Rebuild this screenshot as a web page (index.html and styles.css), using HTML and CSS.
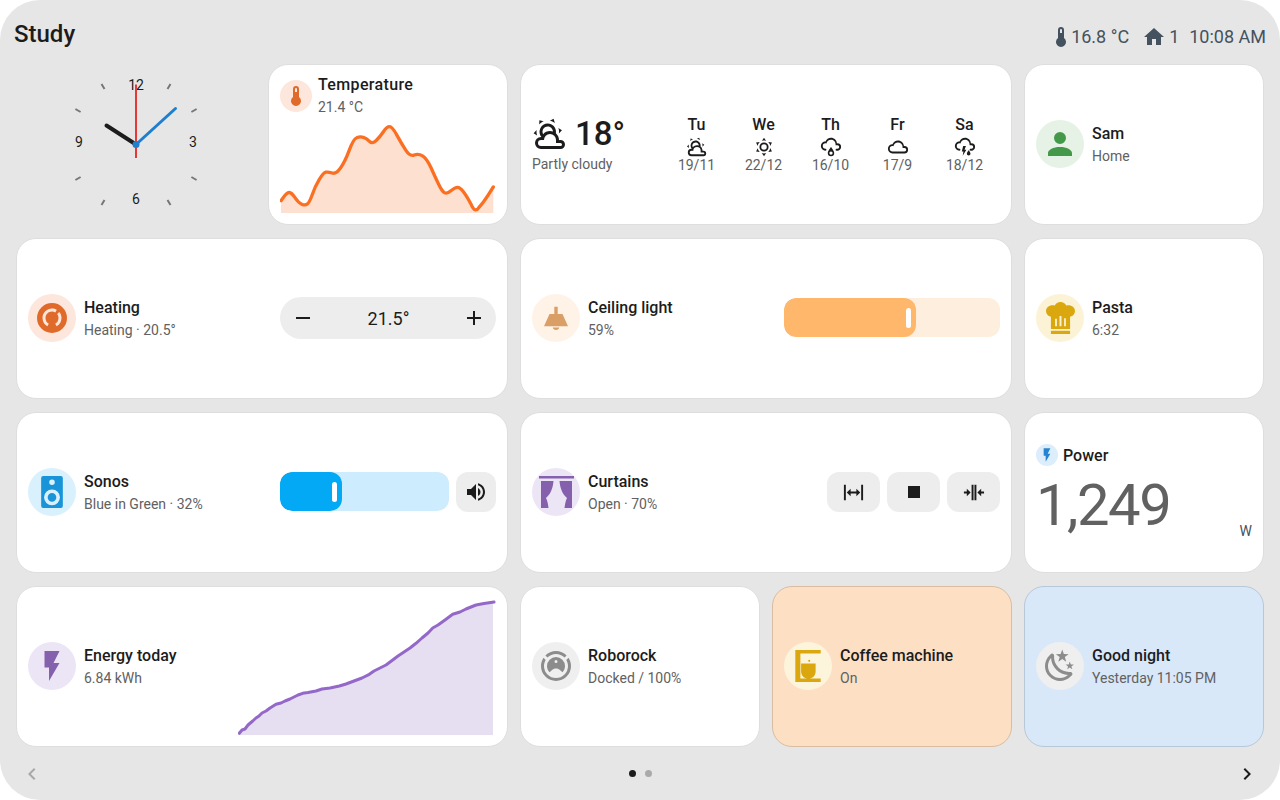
FILE: index.html
```html
<!DOCTYPE html>
<html lang="en">
<head>
<meta charset="utf-8">
<title>Study</title>
<link rel="stylesheet" href="styles.css">
</head>
<body>
<div class="screen">
  <header class="topbar">
    <h1 class="title">Study</h1>
    <div class="status">
      <span class="status-item"><svg class="i24 status-thermo" viewBox="0 0 24 24"><path d="M15 13V5A3 3 0 0 0 9 5V13A5 5 0 1 0 15 13M12 4A1 1 0 0 1 13 5V8H11V5A1 1 0 0 1 12 4Z"/></svg>16.8 °C</span>
      <span class="status-item status-home"><svg class="i24" viewBox="0 0 24 24"><path d="M10,20V14H14V20H19V12H22L12,3L2,12H5V20H10Z"/></svg>1</span>
      <span class="status-item">10:08 AM</span>
    </div>
  </header>

  <main class="grid">
    <div class="clock">
      <svg class="clock-svg" viewBox="16 63.500 240 161">
        <g class="clock-ticks">
          <path d="M101.500 83.400L104.500 88.600M170.500 83.400L167.500 88.600M75.400 108.500L80.600 111.500M196.600 108.500L191.400 111.500M75.400 179.500L80.600 176.500M196.600 179.500L191.400 176.500M101.500 204.600L104.500 199.400M170.500 204.600L167.500 199.400"/>
        </g>
        <g class="clock-nums">
          <text x="136" y="89.500">12</text>
          <text x="193" y="146.500">3</text>
          <text x="136" y="203.500">6</text>
          <text x="79" y="146.500">9</text>
        </g>
        <path class="hand-h" d="M136 144L106.500 125"/>
        <path class="hand-m" d="M136 144L175.500 108"/>
        <path class="hand-s" d="M136 84V157.500"/>
        <circle class="hand-c" cx="136" cy="144" r="3.500"/>
      </svg>
    </div>

    <section class="card card-col card-temp">
      <div class="row">
        <span class="badge badge-sm badge-low c-orange"><svg class="i24" viewBox="0 0 24 24"><path d="M15 13V5A3 3 0 0 0 9 5V13A5 5 0 1 0 15 13M12 4A1 1 0 0 1 13 5V8H11V5A1 1 0 0 1 12 4Z"/></svg></span>
        <div class="info"><div class="name name-wide">Temperature</div><div class="sub">21.4 °C</div></div>
      </div>
      <svg class="temp-chart" viewBox="280 120 216 96">
        <path class="temp-fill" d="M281 200.700Q286.700 192.300 289.200 192.500Q291.700 192.700 295 197.700Q298.300 202.700 301.700 204.200Q305 205.700 307.200 204.200Q309.300 202.700 312.200 194.700Q315 186.700 319.200 179.700Q323.300 172.700 325.800 172.200Q328.300 171.700 332.200 173Q336 174.300 340.500 168Q345 161.700 349.200 150.400Q353.300 139 356.700 137.700Q360 136.300 363.400 137.300Q366.700 138.300 369.500 141.300Q372.300 144.300 376.200 140.500Q380 136.700 383.400 131.700Q386.700 126.700 389.500 126.700Q392.300 126.700 397 135.400Q401.700 144 405.900 150.400Q410 156.700 414.200 155Q418.300 153.300 422.500 155.800Q426.700 158.300 430.900 167.500Q435 176.700 438.400 183.700Q441.700 190.700 444.200 192.500Q446.700 194.300 450.900 190.800Q455 187.300 457.500 187.300Q460 187.300 463.400 191.700Q466.700 196 470.900 203.900Q475 214 479.200 207.200Q483.300 202.700 488.300 194.900L493.300 187V213H281Z"/>
        <path class="temp-line" d="M281 200.700Q286.700 192.300 289.200 192.500Q291.700 192.700 295 197.700Q298.300 202.700 301.700 204.200Q305 205.700 307.200 204.200Q309.300 202.700 312.200 194.700Q315 186.700 319.200 179.700Q323.300 172.700 325.800 172.200Q328.300 171.700 332.200 173Q336 174.300 340.500 168Q345 161.700 349.200 150.400Q353.300 139 356.700 137.700Q360 136.300 363.400 137.300Q366.700 138.300 369.500 141.300Q372.300 144.300 376.200 140.500Q380 136.700 383.400 131.700Q386.700 126.700 389.500 126.700Q392.300 126.700 397 135.400Q401.700 144 405.900 150.400Q410 156.700 414.200 155Q418.300 153.300 422.500 155.800Q426.700 158.300 430.900 167.500Q435 176.700 438.400 183.700Q441.700 190.700 444.200 192.500Q446.700 194.300 450.900 190.800Q455 187.300 457.500 187.300Q460 187.300 463.400 191.700Q466.700 196 470.900 203.900Q475 214 479.200 207.200Q483.300 202.700 488.300 194.900L493.300 187"/>
      </svg>
    </section>

    <section class="card span2 weather">
      <div class="now">
        <div class="now-top">
          <svg class="i36" viewBox="0 0 24 24"><path d="M12.740,5.470C15.100,6.500 16.350,9.030 15.920,11.460C17.190,12.560 18,14.190 18,16V16.170C18.310,16.060 18.650,16 19,16A3,3 0 0,1 22,19A3,3 0 0,1 19,22H6A4,4 0 0,1 2,18A4,4 0 0,1 6,14H6.270C5,12.450 4.600,10.240 5.500,8.260C6.720,5.500 9.970,4.240 12.740,5.470M11.930,7.300C10.160,6.500 8.090,7.310 7.310,9.070C6.850,10.090 6.930,11.220 7.410,12.130C8.500,10.830 10.160,10 12,10C12.700,10 13.380,10.120 14,10.340C13.940,9.060 13.180,7.860 11.930,7.300M13.550,3.640C13,3.400 12.450,3.230 11.880,3.120L14.370,1.820L15.270,4.710C14.760,4.290 14.190,3.930 13.550,3.640M6.090,4.440C5.600,4.790 5.170,5.190 4.800,5.630L4.910,2.820L7.870,3.500C7.250,3.710 6.650,4.030 6.090,4.440M18,9.710C17.910,9.120 17.780,8.550 17.590,8L19.970,9.500L17.920,11.730C18.030,11.080 18.050,10.400 18,9.710M3.040,11.300C3.110,11.900 3.240,12.470 3.430,13L1.060,11.500L3.100,9.280C3,9.930 2.970,10.610 3.040,11.300M19,18H16V16A4,4 0 0,0 12,12A4,4 0 0,0 8,16H6A2,2 0 0,0 4,18A2,2 0 0,0 6,20H19A1,1 0 0,0 20,19A1,1 0 0,0 19,18Z"/></svg>
          <span class="now-temp">18°</span>
        </div>
        <div class="sub">Partly cloudy</div>
      </div>
      <div class="forecast">
        <div class="day"><div class="day-name">Tu</div><svg class="i22" viewBox="0 0 24 24"><path d="M12.740,5.470C15.100,6.500 16.350,9.030 15.920,11.460C17.190,12.560 18,14.190 18,16V16.170C18.310,16.060 18.650,16 19,16A3,3 0 0,1 22,19A3,3 0 0,1 19,22H6A4,4 0 0,1 2,18A4,4 0 0,1 6,14H6.270C5,12.450 4.600,10.240 5.500,8.260C6.720,5.500 9.970,4.240 12.740,5.470M11.930,7.300C10.160,6.500 8.090,7.310 7.310,9.070C6.850,10.090 6.930,11.220 7.410,12.130C8.500,10.830 10.160,10 12,10C12.700,10 13.380,10.120 14,10.340C13.940,9.060 13.180,7.860 11.930,7.300M13.550,3.640C13,3.400 12.450,3.230 11.880,3.120L14.370,1.820L15.270,4.710C14.760,4.290 14.190,3.930 13.550,3.640M6.090,4.440C5.600,4.790 5.170,5.190 4.800,5.630L4.910,2.820L7.870,3.500C7.250,3.710 6.650,4.030 6.090,4.440M18,9.710C17.910,9.120 17.780,8.550 17.590,8L19.970,9.500L17.920,11.730C18.030,11.080 18.050,10.400 18,9.710M3.040,11.300C3.110,11.900 3.240,12.470 3.430,13L1.060,11.500L3.100,9.280C3,9.930 2.970,10.610 3.040,11.300M19,18H16V16A4,4 0 0,0 12,12A4,4 0 0,0 8,16H6A2,2 0 0,0 4,18A2,2 0 0,0 6,20H19A1,1 0 0,0 20,19A1,1 0 0,0 19,18Z"/></svg><div class="sub">19/11</div></div>
        <div class="day"><div class="day-name">We</div><svg class="i22" viewBox="0 0 24 24"><path d="M12,7A5,5 0 0,1 17,12A5,5 0 0,1 12,17A5,5 0 0,1 7,12A5,5 0 0,1 12,7M12,9A3,3 0 0,0 9,12A3,3 0 0,0 12,15A3,3 0 0,0 15,12A3,3 0 0,0 12,9M12,2L14.390,5.420C13.650,5.150 12.840,5 12,5C11.160,5 10.350,5.150 9.610,5.420L12,2M3.340,7L7.500,6.650C6.900,7.160 6.360,7.780 5.940,8.500C5.500,9.240 5.250,10 5.110,10.790L3.340,7M3.360,17L5.120,13.230C5.260,14 5.530,14.780 5.950,15.500C6.370,16.240 6.910,16.860 7.500,17.370L3.360,17M20.650,7L18.880,10.790C18.740,10 18.470,9.230 18.050,8.500C17.630,7.780 17.100,7.150 16.500,6.640L20.650,7M20.640,17L16.500,17.360C17.090,16.850 17.620,16.220 18.040,15.500C18.460,14.770 18.730,14 18.870,13.210L20.640,17M12,22L9.590,18.560C10.330,18.830 11.140,19 12,19C12.820,19 13.630,18.830 14.370,18.560L12,22Z"/></svg><div class="sub">22/12</div></div>
        <div class="day"><div class="day-name">Th</div><svg class="i22" viewBox="0 0 24 24"><path d="M6,14.030A1,1 0 0,1 7,15.030C7,15.580 6.550,16.030 6,16.030C3.240,16.030 1,13.790 1,11.030C1,8.270 3.240,6.030 6,6.030C7,3.680 9.300,2.030 12,2.030C15.430,2.030 18.240,4.690 18.500,8.060L19,8.030A4,4 0 0,1 23,12.030C23,14.240 21.210,16.030 19,16.030H18C17.450,16.030 17,15.580 17,15.030C17,14.470 17.450,14.030 18,14.030H19A2,2 0 0,0 21,12.030A2,2 0 0,0 19,10.030H17V9.030C17,6.270 14.760,4.030 12,4.030C9.500,4.030 7.450,5.840 7.060,8.210C6.730,8.090 6.370,8.030 6,8.030A3,3 0 0,0 3,11.030A3,3 0 0,0 6,14.030M12,12C12.500,12.700 15.500,16.500 15.500,18.500A3.500,3.500 0 0,1 8.500,18.500C8.500,16.500 11.500,12.700 12,12M12,16.800A1.800,1.800 0 0,0 10.200,18.600A1.800,1.800 0 0,0 13.800,18.600A1.800,1.800 0 0,0 12,16.800Z"/></svg><div class="sub">16/10</div></div>
        <div class="day"><div class="day-name">Fr</div><svg class="i22" viewBox="0 0 24 24"><path d="M6,19A5,5 0 0,1 1,14A5,5 0 0,1 6,9C7,6.650 9.300,5 12,5C15.430,5 18.240,7.660 18.500,11.030L19,11A4,4 0 0,1 23,15A4,4 0 0,1 19,19H6M19,13H17V12A5,5 0 0,0 12,7C9.500,7 7.450,8.820 7.060,11.190C6.730,11.070 6.370,11 6,11A3,3 0 0,0 3,14A3,3 0 0,0 6,17H19A2,2 0 0,0 21,15A2,2 0 0,0 19,13Z"/></svg><div class="sub">17/9</div></div>
        <div class="day"><div class="day-name">Sa</div><svg class="i22" viewBox="0 0 24 24"><path d="M6,14.030A1,1 0 0,1 7,15.030C7,15.580 6.550,16.030 6,16.030C3.240,16.030 1,13.790 1,11.030C1,8.270 3.240,6.030 6,6.030C7,3.680 9.300,2.030 12,2.030C15.430,2.030 18.240,4.690 18.500,8.060L19,8.030A4,4 0 0,1 23,12.030C23,14.240 21.210,16.030 19,16.030H18C17.450,16.030 17,15.580 17,15.030C17,14.470 17.450,14.030 18,14.030H19A2,2 0 0,0 21,12.030A2,2 0 0,0 19,10.030H17V9.030C17,6.270 14.760,4.030 12,4.030C9.500,4.030 7.450,5.840 7.060,8.210C6.730,8.090 6.370,8.030 6,8.030A3,3 0 0,0 3,11.030A3,3 0 0,0 6,14.030M10,11H13L11.500,15H13.500L9.500,21.500L10.300,17H8.500ZM16,15.500C16.400,16.100 18,18 18,19.300A2,2 0 0,1 14,19.300C14,18 15.600,16.100 16,15.500Z"/></svg><div class="sub">18/12</div></div>
      </div>
    </section>

    <section class="card">
      <span class="badge c-green"><svg class="i36" viewBox="0 0 24 24"><path d="M12,4A4,4 0 0,1 16,8A4,4 0 0,1 12,12A4,4 0 0,1 8,8A4,4 0 0,1 12,4M12,14C16.420,14 20,15.790 20,18V20H4V18C4,15.790 7.580,14 12,14Z"/></svg></span>
      <div class="info"><div class="name">Sam</div><div class="sub">Home</div></div>
    </section>

    <section class="card span2">
      <span class="badge c-orange"><svg class="i30" viewBox="0 0 30 30"><path fill-rule="evenodd" d="M15 0A15 15 0 1 0 15 30A15 15 0 1 0 15 0ZM15 5.500C9.800 5.500 5.500 9.800 5.500 15C5.500 18.600 7.400 21.700 10.300 23.300L11.800 20.700C9.800 19.700 8.500 17.500 8.500 15C8.500 11.400 11.400 8.500 15 8.500C16.200 8.500 17.300 8.800 18.300 9.400L19.800 6.800C18.400 6 16.800 5.500 15 5.500ZM22.300 8.900L20.200 11C21 12.100 21.500 13.500 21.500 15C21.500 17.500 20.200 19.700 18.200 20.700L19.700 23.300C22.600 21.700 24.500 18.600 24.500 15C24.500 12.600 23.700 10.500 22.300 8.900Z"/></svg></span>
      <div class="info"><div class="name">Heating</div><div class="sub">Heating · 20.5°</div></div>
      <div class="stepper">
        <svg class="i24 dark" viewBox="0 0 24 24"><path d="M19,13H5V11H19V13Z"/></svg>
        <span class="stepper-val">21.5°</span>
        <svg class="i24 dark" viewBox="0 0 24 24"><path d="M19,13H13V19H11V13H5V11H11V5H13V11H19V13Z"/></svg>
      </div>
    </section>

    <section class="card span2">
      <span class="badge c-lamp"><svg class="i24" viewBox="0 0 24 24"><path d="M10.300 0.700H13.700V8H18.500L24 20.300H0L5.500 8H10.300ZM8.700 21.500H15.300C15 23 13.700 24 12 24C10.300 24 9 23 8.700 21.500Z"/></svg></span>
      <div class="info"><div class="name">Ceiling light</div><div class="sub">59%</div></div>
      <div class="slider slider-light"><div class="slider-fill fill-light"><span class="thumb"></span></div></div>
    </section>

    <section class="card">
      <span class="badge c-yellow"><svg class="i-hat" viewBox="2.900 0 24.200 28.500" preserveAspectRatio="none"><path fill-rule="evenodd" d="M15 0C12.800 0 11 1.300 10.300 3.100C9.700 2.900 9.100 2.800 8.500 2.800C5.200 2.800 2.900 5.100 2.900 8C2.900 10.500 4.600 12.500 7 13.100V24H23V13.100C25.400 12.500 27.100 10.500 27.100 8C27.100 5.100 24.800 2.800 21.500 2.800C20.900 2.800 20.300 2.900 19.700 3.100C19 1.300 17.200 0 15 0ZM10.500 15V21.500H12V15ZM14.200 12.500V21.500H15.800V12.500ZM18 14.500V21.500H19.500V14.500ZM7 25.500H23V28.500H7Z"/></svg></span>
      <div class="info"><div class="name">Pasta</div><div class="sub">6:32</div></div>
    </section>

    <section class="card span2">
      <span class="badge c-blue"><svg class="i32" viewBox="0 0 21 31"><path fill-rule="evenodd" d="M2 0H19A2 2 0 0 1 21 2V29A2 2 0 0 1 19 31H2A2 2 0 0 1 0 29V2A2 2 0 0 1 2 0ZM10.500 3.400A2.700 2.700 0 1 0 10.500 8.800A2.700 2.700 0 1 0 10.500 3.400ZM10.500 13A7.700 7.700 0 1 0 10.500 28.400A7.700 7.700 0 1 0 10.500 13ZM10.500 16.500A4.200 4.200 0 1 1 10.500 24.900A4.200 4.200 0 1 1 10.500 16.500Z"/></svg></span>
      <div class="info"><div class="name">Sonos</div><div class="sub">Blue in Green · 32%</div></div>
      <div class="media-controls">
        <div class="slider slider-media"><div class="slider-fill fill-media"><span class="thumb"></span></div></div>
        <span class="btn btn-square"><svg class="i24 dark" viewBox="0 0 24 24"><path d="M14,3.230V5.290C16.890,6.150 19,8.830 19,12C19,15.170 16.890,17.840 14,18.700V20.770C18,19.860 21,16.280 21,12C21,7.720 18,4.140 14,3.230M16.500,12C16.500,10.230 15.500,8.710 14,7.970V16C15.500,15.290 16.500,13.760 16.500,12M3,9V15H7L12,20V4L7,9H3Z"/></svg></span>
      </div>
    </section>

    <section class="card span2">
      <span class="badge c-purple"><svg class="i-curtain" viewBox="0 0 35 33"><path d="M0 0H35V2.500H0ZM2 5H14.500C14 11 12 18 7 22C8.500 25 9 28 9.500 32H2ZM33 5H20.500C21 11 23 18 28 22C26.500 25 26 28 25.500 32H33Z"/></svg></span>
      <div class="info"><div class="name">Curtains</div><div class="sub">Open · 70%</div></div>
      <div class="cover-controls">
        <span class="btn"><svg class="i23 dark" viewBox="0 0 24 24"><path d="M9,11H15V8L19,12L15,16V13H9V16L5,12L9,8V11M2,20V4H4V20H2M20,20V4H22V20H20Z"/></svg></span>
        <span class="btn"><svg class="i24 dark" viewBox="0 0 24 24"><path d="M18,18H6V6H18V18Z"/></svg></span>
        <span class="btn"><svg class="i23 dark" viewBox="0 0 24 24"><path d="M13,20V4H15.030V20H13M10,20V4H12.030V20H10M5,8L9.030,12L5,16V13H2V11H5V8M20,16L16,12L20,8V11H23V13H20V16Z"/></svg></span>
      </div>
    </section>

    <section class="card card-col power">
      <div class="row row-power">
        <span class="badge badge-xs c-sky"><svg class="i16" viewBox="0 0 24 24"><path d="M7,2V13H10V22L17,10H13L17,2H7Z"/></svg></span>
        <div class="name">Power</div>
      </div>
      <div class="power-row"><span class="power-num">1,249</span><span class="power-unit">W</span></div>
    </section>

    <section class="card span2">
      <span class="badge c-violet"><svg class="i36" viewBox="0 0 24 24"><path d="M7,2V13H10V22L17,10H13L17,2H7Z"/></svg></span>
      <div class="info"><div class="name">Energy today</div><div class="sub">6.84 kWh</div></div>
      <svg class="energy-chart" viewBox="238 595 258 142">
        <path class="energy-fill" d="M239.300 733.300L242 730L245 729L248 725L252.700 721L256 718L259 716L262 713L266 711L270 708L276 704.300L281 703L285 701L290 699L294 697L298 695L302.700 693.300L308 692.500L316 691L322 689L330 688L339.300 686L346 684L354 681L362 678L369.300 674.300L374 671L380 668L386 665L392.700 660L398 656L404 652L410 648L416 643.300L422 638L428 633L432.700 628L438 625L445 620L452.700 614.300L460 612L466 609L476 605L484 603.500L493 602V735H239.300Z"/>
        <path class="energy-line" d="M239.300 733.300L242 730L245 729L248 725L252.700 721L256 718L259 716L262 713L266 711L270 708L276 704.300L281 703L285 701L290 699L294 697L298 695L302.700 693.300L308 692.500L316 691L322 689L330 688L339.300 686L346 684L354 681L362 678L369.300 674.300L374 671L380 668L386 665L392.700 660L398 656L404 652L410 648L416 643.300L422 638L428 633L432.700 628L438 625L445 620L452.700 614.300L460 612L466 609L476 605L484 603.500L494 602"/>
      </svg>
    </section>

    <section class="card">
      <span class="badge c-grey"><svg class="i36" viewBox="0 0 24 24"><path d="M12,2C14.650,2 17.190,3.060 19.070,4.930L17.650,6.350C16.150,4.850 14.120,4 12,4C9.880,4 7.840,4.840 6.350,6.350L4.930,4.930C6.810,3.060 9.350,2 12,2M3.660,6.500L5.110,7.940C4.390,9.170 4,10.570 4,12A8,8 0 0,0 12,20A8,8 0 0,0 20,12C20,10.570 19.610,9.170 18.880,7.940L20.340,6.500C21.420,8.120 22,10.040 22,12A10,10 0 0,1 12,22A10,10 0 0,1 2,12C2,10.040 2.580,8.120 3.660,6.500M12,6A6,6 0 0,1 18,12C18,13.590 17.370,15.120 16.240,16.240L14.830,14.830C14.080,14.080 13.060,13.660 12,13.660C10.940,13.660 9.920,14.080 9.170,14.830L7.760,16.240C6.630,15.120 6,13.590 6,12A6,6 0 0,1 12,6M12,8A1,1 0 0,0 11,9A1,1 0 0,0 12,10A1,1 0 0,0 13,9A1,1 0 0,0 12,8Z"/></svg></span>
      <div class="info"><div class="name">Roborock</div><div class="sub">Docked / 100%</div></div>
    </section>

    <section class="card card-coffee">
      <span class="badge c-yellow-l"><svg class="i32" viewBox="0 0 25 31.500"><path fill-rule="evenodd" d="M0 0H25V3.500H5V28H25V31.500H0ZM13.700 9.700A1 1 0 1 1 13.700 11.700A1 1 0 1 1 13.700 9.700ZM5.700 13.300H20V21C20 25 17.500 28 14 28H11.700C8.200 28 5.700 25 5.700 21Z"/></svg></span>
      <div class="info"><div class="name">Coffee machine</div><div class="sub">On</div></div>
    </section>

    <section class="card card-night">
      <span class="badge c-grey-l"><svg class="i36" viewBox="0 0 24 24"><path d="M17.750,4.090L15.220,6.030L16.130,9.090L13.500,7.280L10.870,9.090L11.780,6.030L9.250,4.090L12.440,4L13.500,1L14.560,4L17.750,4.090M21.250,11L19.610,12.250L20.200,14.230L18.500,13.060L16.800,14.230L17.390,12.250L15.750,11L17.810,10.950L18.500,9L19.190,10.950L21.250,11M18.970,15.950C19.800,15.870 20.690,17.050 20.160,17.800C19.840,18.250 19.500,18.670 19.080,19.070C15.170,23 8.840,23 4.940,19.070C1.030,15.170 1.030,8.830 4.940,4.930C5.340,4.530 5.760,4.170 6.210,3.850C6.960,3.320 8.140,4.210 8.060,5.040C7.790,7.900 8.750,10.870 10.950,13.060C13.140,15.260 16.100,16.220 18.970,15.950M17.330,17.970C14.500,17.810 11.700,16.640 9.530,14.500C7.360,12.310 6.200,9.500 6.040,6.680C3.230,9.820 3.340,14.640 6.350,17.660C9.370,20.670 14.190,20.780 17.330,17.970Z"/></svg></span>
      <div class="info"><div class="name">Good night</div><div class="sub">Yesterday 11:05 PM</div></div>
    </section>
  </main>

  <footer class="pager">
    <svg class="i24 chev-off" viewBox="0 0 24 24"><path d="M15.410,16.580L10.830,12L15.410,7.410L14,6L8,12L14,18L15.410,16.580Z"/></svg>
    <div class="dots"><span class="dot dot-on"></span><span class="dot"></span></div>
    <svg class="i24 chev-on" viewBox="0 0 24 24"><path d="M8.590,16.580L13.170,12L8.590,7.410L10,6L16,12L10,18L8.590,16.580Z"/></svg>
  </footer>
</div>
</body>
</html>
```
FILE: styles.css
```css
* { box-sizing: border-box; }
html, body { margin: 0; padding: 0; background: #fff; }
body { font-family: Roboto, "Liberation Sans", sans-serif; color: #1c1c1c; }
svg { display: block; flex: none; fill: currentColor; }

.screen {
  width: 1280px; height: 800px;
  background: #e6e6e6;
  border-radius: 40px;
  display: flex; flex-direction: column;
  overflow: hidden;
}

.topbar {
  height: 63.5px; flex: none;
  display: flex; justify-content: space-between; align-items: flex-start;
  padding: 0 14px;
}
.title { margin: 19px 0 0; font-size: 24px; line-height: 30px; font-weight: 500; }
.status { display: flex; gap: 12px; margin-top: 25px; color: #44525f; font-size: 18px; line-height: 22px; }
.status-item { display: flex; align-items: center; }
.status-thermo { margin-right: -2px; }
.status-home { gap: 3px; margin: 0 -2px 0 1px; }

.grid {
  flex: none;
  display: grid;
  grid-template-columns: repeat(5, 240px);
  grid-auto-rows: 161px;
  column-gap: 12px; row-gap: 13px;
  padding: 0 16px;
}

.card {
  background: #fff;
  border: 1px solid #dedede;
  border-radius: 20px;
  padding: 0 11px;
  display: flex; align-items: center; gap: 8px;
  min-width: 0;
}
.card-col { flex-direction: column; align-items: stretch; gap: 0; }
.card-temp { padding-top: 8px; }
.span2 { grid-column: span 2; }
.row { display: flex; align-items: center; gap: 6px; }
.row-power { gap: 5px; }

.badge {
  width: 48px; height: 48px; flex: none;
  border-radius: 50%;
  display: flex; align-items: center; justify-content: center;
}
.badge-sm { width: 32px; height: 32px; }
.badge-low { margin-top: 2px; }
.badge-xs { width: 22px; height: 22px; }

.c-orange { background: #fde6dc; color: #df6a2a; }
.c-green { background: #e5f2e5; color: #43984a; }
.c-lamp { background: #fef3e6; color: #d99f66; }
.c-yellow { background: #fcf3d6; color: #dba70f; }
.c-yellow-l { background: #fdf4dc; color: #dba70f; }
.c-blue { background: #d9f1fd; color: #1a94d8; }
.c-purple { background: #ece5f5; color: #8560ad; }
.c-violet { background: #ece5f5; color: #8560ad; }
.c-sky { background: #dcedfc; color: #2583d0; }
.c-grey { background: #efefef; color: #8c8c8c; }
.c-grey-l { background: #efefef; color: #8c8c8c; }

.i16 { width: 16px; height: 16px; }
.i22 { width: 22px; height: 22px; }
.i23 { width: 23px; height: 23px; }
.i24 { width: 24px; height: 24px; }
.i30 { width: 30px; height: 30px; }
.i32 { width: 32px; height: 32px; }
.i36 { width: 36px; height: 36px; }
.i-curtain { width: 35px; height: 33px; }
.i-hat { width: 29px; height: 32px; }
.dark { color: #1c1c1c; }

.info { display: flex; flex-direction: column; gap: 1px; min-width: 0; }
.name { font-size: 16px; line-height: 23px; font-weight: 500; color: #1c1c1c; white-space: nowrap; }
.name-wide { letter-spacing: 0.35px; }
.sub { font-size: 14px; line-height: 20px; color: #616161; white-space: nowrap; }

.clock { display: flex; }
.clock-svg { width: 240px; height: 161px; }
.clock-ticks path { stroke: #777; stroke-width: 2; fill: none; }
.clock-nums text { font-family: Roboto, sans-serif; font-size: 14px; text-anchor: middle; fill: #1c1c1c; }
.hand-h { stroke: #1c1c1c; stroke-width: 4; stroke-linecap: round; fill: none; }
.hand-m { stroke: #1f7fcf; stroke-width: 3; stroke-linecap: round; fill: none; }
.hand-s { stroke: #e53935; stroke-width: 2; fill: none; }
.hand-c { fill: #1f7fcf; }

.temp-chart { width: 216px; height: 96px; margin-top: 3.5px; }
.temp-fill { fill: #fde0d0; }
.temp-line { fill: none; stroke: #fb6f22; stroke-width: 3.3; stroke-linejoin: round; stroke-linecap: round; }

.weather { justify-content: space-between; }
.now { display: flex; flex-direction: column; }
.now-top { display: flex; align-items: center; gap: 7px; }
.now-temp { font-size: 33px; line-height: 40px; font-weight: 500; }
.forecast { display: flex; margin-right: 2px; }
.day { width: 67px; display: flex; flex-direction: column; align-items: center; }
.day-name { font-size: 16px; line-height: 22px; font-weight: 500; }
.day .sub { margin-top: -3px; }

.stepper {
  margin-left: auto; width: 216px; height: 42px;
  border-radius: 21px; background: #ededed;
  display: flex; align-items: center; justify-content: space-between;
  padding: 0 10px 0 11px;
}
.stepper-val { font-size: 18px; color: #1c1c1c; }

.slider { border-radius: 12px; height: 39px; margin-bottom: 1px; display: flex; overflow: hidden; }
.slider-light { margin-left: auto; width: 216px; background: #fdeedd; }
.slider-media { width: 169px; background: #cdecfd; }
.slider-fill { height: 100%; border-radius: 12px; display: flex; align-items: center; justify-content: flex-end; padding-right: 5px; }
.fill-light { width: 132px; background: #ffb76b; }
.fill-media { width: 62px; background: #03a9f4; }
.thumb { width: 5px; height: 20px; border-radius: 3px; background: #fff; }

.media-controls { margin-left: auto; display: flex; align-items: center; gap: 7px; }
.cover-controls { margin-left: auto; display: flex; gap: 7px; }
.btn {
  width: 53px; height: 40px; border-radius: 12px; background: #ededed;
  display: flex; align-items: center; justify-content: center;
}
.btn-square { width: 40px; }

.power { padding-top: 31px; }
.power-row { display: flex; justify-content: space-between; align-items: flex-end; margin-top: 8px; height: 66px; }
.power-num { font-size: 58px; line-height: 60px; letter-spacing: -1.5px; color: #616161; padding-bottom: 6px; }
.power-unit { font-size: 14px; line-height: 20px; color: #44525f; }

.energy-chart { width: 258px; height: 142px; margin-left: auto; align-self: flex-end; margin-bottom: 8.5px; }
.energy-fill { fill: #e6dff2; }
.energy-line { fill: none; stroke: #9468c8; stroke-width: 3; stroke-linejoin: round; stroke-linecap: round; }

.card-coffee { background: #fde0c4; border-color: #d8bda2; }
.card-night { background: #d9e8f9; border-color: #b7c8d8; }

.pager {
  flex: 1; display: flex; align-items: center; justify-content: space-between;
  padding: 1px 21px 0 20px;
}
.chev-off { color: #a8a8a8; }
.chev-on { color: #1c1c1c; }
.dots { display: flex; gap: 9px; margin: -1px 0 0 2px; }
.dot { width: 7px; height: 7px; border-radius: 50%; background: #aaa; }
.dot-on { background: #1c1c1c; }
```
